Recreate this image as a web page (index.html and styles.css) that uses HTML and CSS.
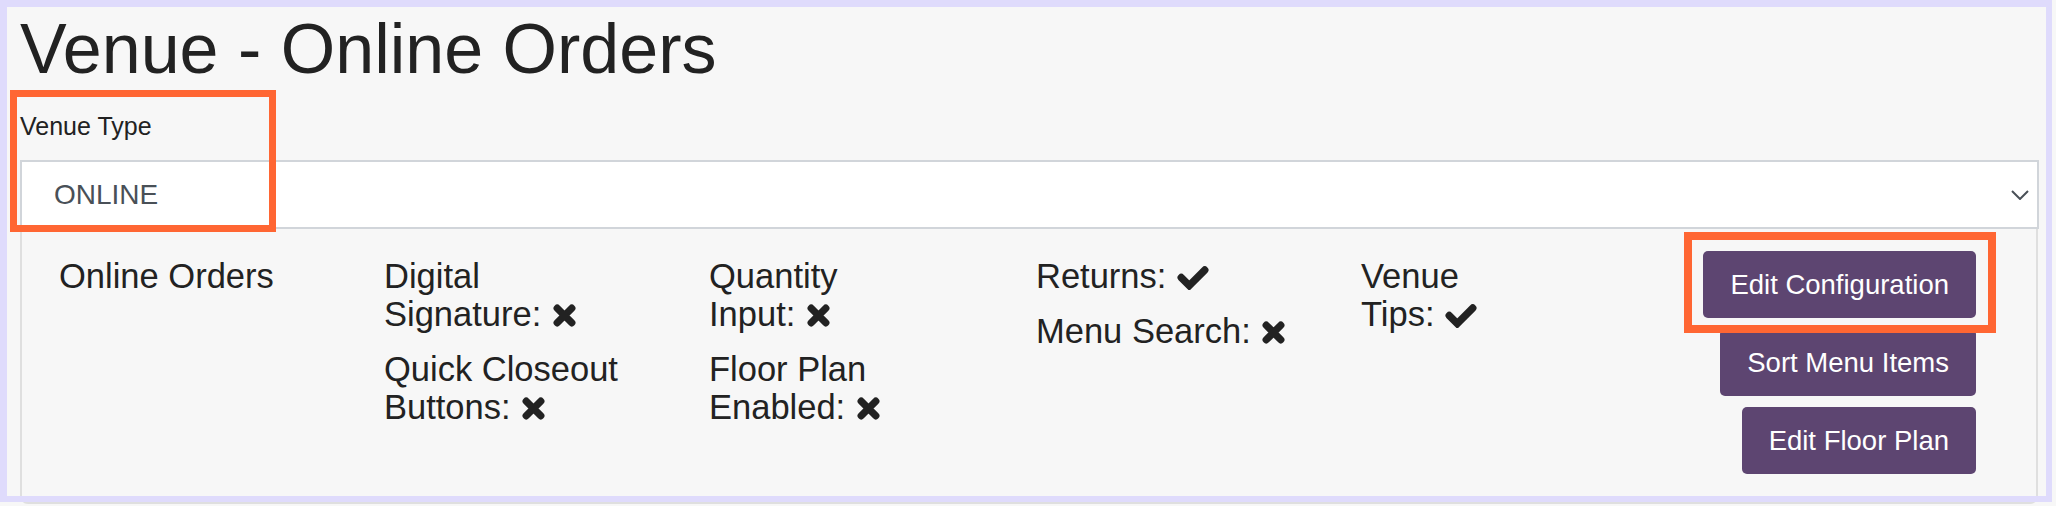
FILE: index.html
```html
<!DOCTYPE html>
<html lang="en">

<head>
    <meta charset="UTF-8">
    <meta name="viewport" content="width=device-width, initial-scale=1.0">
    <title>Venue - Online Orders</title>
    <link rel="stylesheet" href="styles.css">
</head>

<body>
    <div class="page">
        <h1 class="page-title">Venue - Online Orders</h1>

        <label class="field-label" for="venue-type">Venue Type</label>
        <div class="select-box" id="venue-type">
            <span>ONLINE</span>
            <svg class="chevron" viewBox="0 0 18 10"><path d="M1 1L9 9L17 1" /></svg>
        </div>

        <section class="venue-panel">
            <div class="venue-name">Online Orders</div>

            <div class="flag-col col-b">
                <div class="flag">Digital Signature: <svg class="ico" viewBox="0 0 24 24"><path d="M5 5L19 19M19 5L5 19" /></svg></div>
                <div class="flag">Quick Closeout Buttons: <svg class="ico" viewBox="0 0 24 24"><path d="M5 5L19 19M19 5L5 19" /></svg></div>
            </div>

            <div class="flag-col col-c">
                <div class="flag">Quantity Input: <svg class="ico" viewBox="0 0 24 24"><path d="M5 5L19 19M19 5L5 19" /></svg></div>
                <div class="flag">Floor Plan Enabled: <svg class="ico" viewBox="0 0 24 24"><path d="M5 5L19 19M19 5L5 19" /></svg></div>
            </div>

            <div class="flag-col col-d">
                <div class="flag">Returns: <svg class="ico ico-check" viewBox="0 0 30 24"><path d="M4 12.5L11.5 20L26 5.5" /></svg></div>
                <div class="flag">Menu Search: <svg class="ico" viewBox="0 0 24 24"><path d="M5 5L19 19M19 5L5 19" /></svg></div>
            </div>

            <div class="flag-col col-e">
                <div class="flag">Venue Tips: <svg class="ico ico-check" viewBox="0 0 30 24"><path d="M4 12.5L11.5 20L26 5.5" /></svg></div>
            </div>

            <div class="panel-buttons">
                <button>Edit Configuration</button>
                <button>Sort Menu Items</button>
                <button>Edit Floor Plan</button>
            </div>
        </section>
    </div>

    <!-- screenshot annotations -->
    <div class="annotation frame"></div>
    <div class="annotation mark mark-type"></div>
    <div class="annotation mark mark-config"></div>
</body>

</html>
```

FILE: styles.css
```css
*, *::before, *::after {
    box-sizing: border-box;
}

:root {
    --page-bg: #f7f7f7;
    --text-color: #222222;
    --select-text: #495057;
    --select-border: #d1d5da;
    --panel-border: #dfdfdf;
    --button-bg: #5d4571;
    --mark-color: #ff6633;
    --frame-color: #dfdbfc;
}

body {
    position: relative;
    margin: 0;
    height: 506px;
    overflow: hidden;
    background: var(--page-bg);
    color: var(--text-color);
    font-family: "Liberation Sans", Arial, Helvetica, sans-serif;
}

.page {
    padding: 7px 17px 0 20px;
}

.page-title {
    margin: 0;
    font-size: 70px;
    font-weight: 400;
    line-height: 84px;
}

.field-label {
    display: block;
    margin-top: 20px;
    font-size: 25px;
    line-height: 30px;
}

.select-box {
    display: flex;
    align-items: center;
    justify-content: space-between;
    height: 69px;
    margin-top: 19px;
    padding: 0 8px 0 32px;
    background: #ffffff;
    border: 2px solid var(--select-border);
    color: var(--select-text);
    font-size: 28px;
}

.chevron {
    width: 18px;
    height: 10px;
    fill: none;
    stroke: var(--select-text);
    stroke-width: 2;
}

.venue-panel {
    display: grid;
    grid-template-columns: 325px 325px 327px 325px 1fr auto;
    align-items: start;
    margin-right: 1px;
    padding: 22px 60px 28px 37px;
    border: 2px solid var(--panel-border);
    border-top-width: 0;
    border-radius: 0 0 8px 8px;
    font-size: 34.5px;
    line-height: 38px;
}

.venue-name,
.flag-col {
    padding-top: 6px;
}

.col-b { width: 250px; }
.col-c { width: 200px; }
.col-d { width: 300px; }
.col-e { width: 160px; }

.flag {
    margin-bottom: 17px;
}

.ico {
    width: 25px;
    height: 25px;
    margin-left: 1px;
    vertical-align: -2px;
    fill: none;
    stroke: currentColor;
    stroke-width: 7;
    stroke-linecap: round;
}

.ico-check {
    width: 32px;
    height: 26px;
    stroke-width: 7;
    stroke-linejoin: miter;
}

.panel-buttons {
    display: flex;
    flex-direction: column;
    align-items: flex-end;
    gap: 11px;
}

.panel-buttons button {
    padding: 13px 27px;
    border: none;
    border-radius: 5px;
    background: var(--button-bg);
    color: #ffffff;
    font-family: inherit;
    font-size: 27.5px;
    line-height: 41px;
    cursor: pointer;
}

.annotation {
    position: absolute;
    pointer-events: none;
}

.frame {
    top: 0;
    left: 0;
    width: 2052px;
    height: 502px;
    border: solid var(--frame-color);
    border-width: 7px 6px 6px 7px;
}

.mark {
    border: 7px solid var(--mark-color);
}

.mark-type {
    top: 90px;
    left: 10px;
    width: 266px;
    height: 142px;
}

.mark-config {
    top: 232px;
    left: 1684px;
    width: 312px;
    height: 101px;
    border-width: 8px;
}
```
